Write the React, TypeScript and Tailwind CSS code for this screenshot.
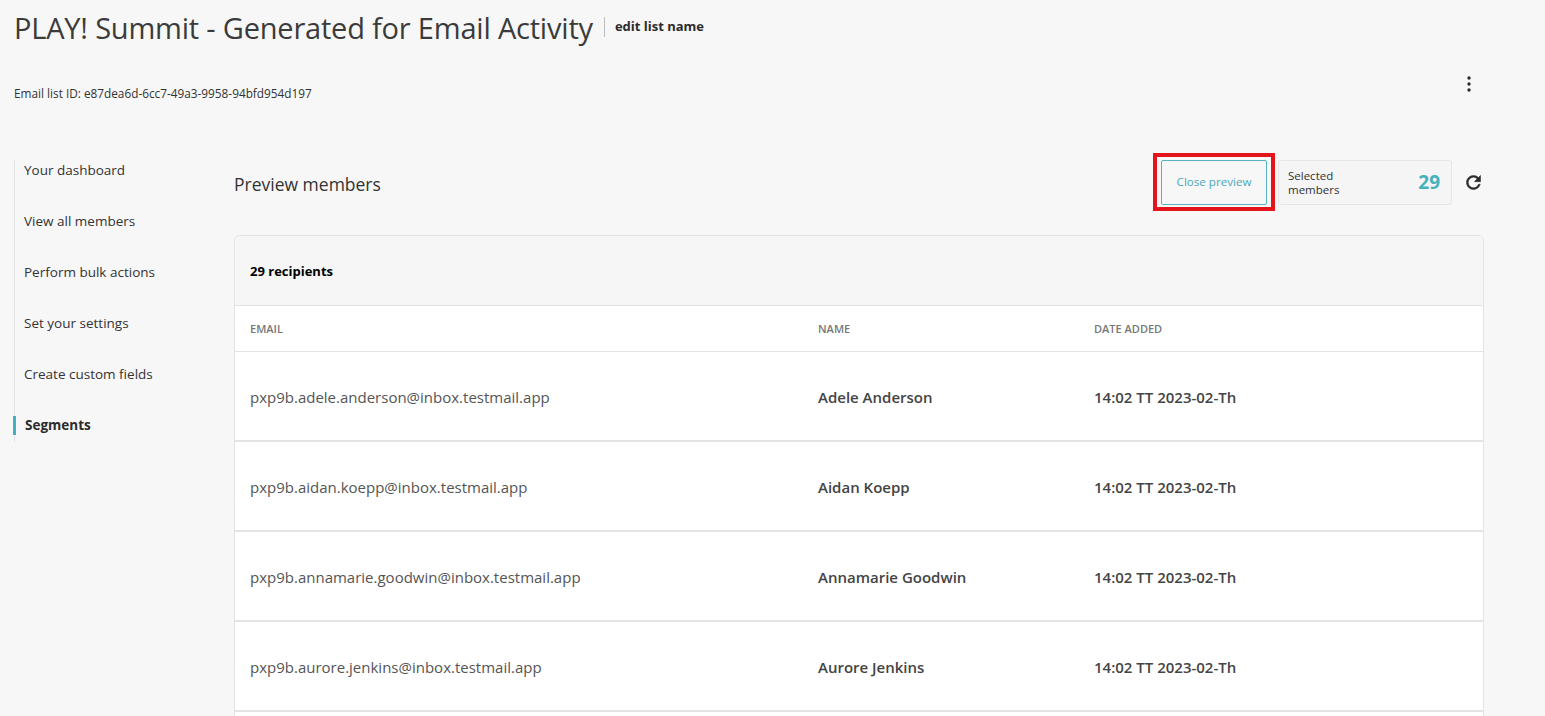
import React from "react";

const members = [
  { email: "pxp9b.adele.anderson@inbox.testmail.app", name: "Adele Anderson" },
  { email: "pxp9b.aidan.koepp@inbox.testmail.app", name: "Aidan Koepp" },
  { email: "pxp9b.annamarie.goodwin@inbox.testmail.app", name: "Annamarie Goodwin" },
  { email: "pxp9b.aurore.jenkins@inbox.testmail.app", name: "Aurore Jenkins" },
];

const navItems = [
  "Your dashboard",
  "View all members",
  "Perform bulk actions",
  "Set your settings",
  "Create custom fields",
];

function KebabIcon() {
  return (
    <svg width="4" height="16" viewBox="0 0 4 16" className="text-[#2b2b2b]">
      <circle cx="2" cy="2" r="1.7" fill="currentColor" />
      <circle cx="2" cy="8" r="1.7" fill="currentColor" />
      <circle cx="2" cy="14" r="1.7" fill="currentColor" />
    </svg>
  );
}

function RefreshIcon() {
  return (
    <svg width="21" height="21" viewBox="0 0 24 24" className="text-[#2b2b2b]">
      <path
        fill="currentColor"
        stroke="currentColor"
        strokeWidth="0.6"
        d="M17.65 6.35C16.2 4.9 14.21 4 12 4c-4.42 0-7.99 3.58-7.99 8s3.57 8 7.99 8c3.73 0 6.84-2.55 7.73-6h-2.08c-.82 2.33-3.04 4-5.65 4-3.31 0-6-2.690-6-6s2.69-6 6-6c1.66 0 3.14.69 4.220 1.78L13 11h7V4l-2.35 2.35z"
      />
    </svg>
  );
}

export default function App() {
  return (
    <div
      className="min-h-screen bg-[#f7f7f7] text-[#333] pl-[14px] pr-[61px]"
      style={{ fontFamily: '"Open Sans", "Noto Sans", sans-serif' }}
    >
      {/* Header */}
      <div className="flex items-center h-[54px]">
        <h1 className="text-[29px] leading-none text-[#3b3b3b] tracking-[-0.2px]">
          PLAY! Summit - Generated for Email Activity
        </h1>
        <span className="ml-[11px] h-[20px] w-px bg-[#bdbdbd]" />
        <button className="ml-[10px] text-[13px] font-bold text-[#2b2b2b]">edit list name</button>
      </div>

      <div className="flex items-center justify-between mt-[31px]">
        <div className="text-[11.8px] text-[#333]">Email list ID: e87dea6d-6cc7-49a3-9958-94bfd954d197</div>
        <button className="mr-[9px] -mt-[20px] p-1">
          <KebabIcon />
        </button>
      </div>

      {/* Body */}
      <div className="flex mt-[57px]">
        {/* Sidebar */}
        <nav className="w-[220px] shrink-0 border-l border-[#e3e3e3] h-[282px] pt-[1px]">
          {navItems.map((item) => (
            <div key={item} className="h-[51px] pl-[9px] text-[13.5px] leading-[18px] text-[#333]">
              {item}
            </div>
          ))}
          <div className="relative h-[24px] pl-[10px] text-[13.5px] leading-[18px] font-bold text-[#2b2b2b]">
            <span className="absolute -left-[2px] top-0 h-[19px] w-[3px] bg-[#3fb2c2]" />
            Segments
          </div>
        </nav>

        {/* Main */}
        <main className="flex-1 min-w-0">
          <div className="flex items-center h-[45px]">
            <h2 className="pt-[4px] text-[17.5px] text-[#333] flex-1">Preview members</h2>
            <div className="relative">
              <div className="absolute -left-[8px] -right-[8px] -top-[7px] -bottom-[6px] border-[4px] border-[#e3141b] pointer-events-none" />
              <button className="h-[45px] w-[106px] border border-[#56b4c2] rounded-[2px] bg-[#f7f7f7] text-[11.6px] text-[#4aa9b8]">
                Close preview
              </button>
            </div>
            <div className="ml-[11px] flex items-center h-[45px] w-[174px] border border-[#e6e6e6] rounded-[3px] bg-[#f5f5f5] pl-[9px] pr-[11px]">
              <div className="flex-1 pt-[1px] text-[11.5px] leading-[14px] text-[#333]">
                Selected
                <br />
                members
              </div>
              <div className="text-[19px] font-bold text-[#47b0be]">29</div>
            </div>
            <button className="ml-[11px]">
              <RefreshIcon />
            </button>
          </div>

          <div className="mt-[30px] border border-[#e3e3e3] rounded-t-[6px] overflow-hidden">
            <div className="h-[70px] flex items-center px-[15px] pt-[4px] bg-[#f6f6f6] text-[13px] font-bold text-black border-b border-[#e3e3e3]">
              29 recipients
            </div>
            <div className="grid grid-cols-[568px_276px_1fr] h-[46px] items-center px-[15px] pt-[2px] bg-white border-b border-[#e3e3e3] text-[11px] font-semibold text-[#777] uppercase">
              <div>Email</div>
              <div>Name</div>
              <div>Date added</div>
            </div>
            {members.map((m) => (
              <div
                key={m.email}
                className="grid grid-cols-[568px_276px_1fr] h-[90px] items-center px-[15px] pt-[4px] bg-white border-b-2 border-[#e3e3e3] text-[15px]"
              >
                <div className="text-[#555]">{m.email}</div>
                <div className="font-semibold text-[#444]">{m.name}</div>
                <div className="font-semibold text-[#444]">14:02 TT 2023-02-Th</div>
              </div>
            ))}
            <div className="h-[90px] bg-white" />
          </div>
        </main>
      </div>
    </div>
  );
}
